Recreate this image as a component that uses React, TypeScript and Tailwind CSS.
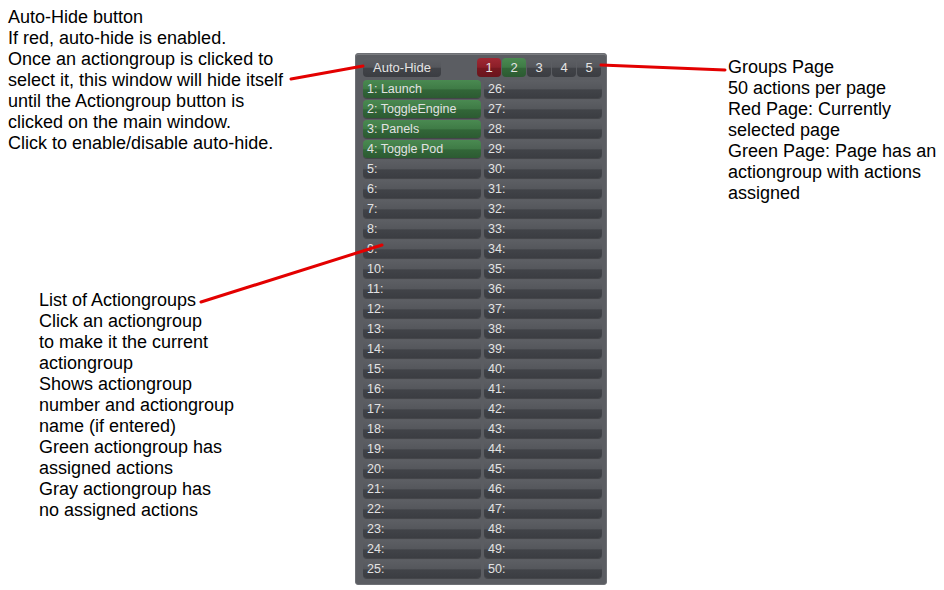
const named: Record<number, string> = {
  1: 'Launch',
  2: 'ToggleEngine',
  3: 'Panels',
  4: 'Toggle Pod',
};

const grayBtn =
  'bg-[linear-gradient(to_bottom,#5d5f64_0%,#55575c_48%,#414348_55%,#3b3d42_100%)]';
const greenBtn =
  'bg-[linear-gradient(to_bottom,#4a8a51_0%,#3f7b46_48%,#326638_55%,#2c5a32_100%)]';
const redBtn =
  'bg-[linear-gradient(to_bottom,#a02833_0%,#8c1f29_48%,#771820_55%,#6a151c_100%)]';

function GroupRow({ n }: { n: number }) {
  const name = named[n];
  return (
    <div
      className={`h-[18px] rounded-[4px] pl-[4px] flex items-center text-[12.5px] leading-none text-[#e2e2e2] shadow-[0_1px_0_rgba(0,0,0,0.25)] ${
        name ? greenBtn : grayBtn
      }`}
    >
      {n}:{name ? ` ${name}` : ''}
    </div>
  );
}

function ActionPanel() {
  const left = Array.from({ length: 25 }, (_, i) => i + 1);
  const right = Array.from({ length: 25 }, (_, i) => i + 26);
  const rows: number[] = [];
  left.forEach((n, i) => rows.push(n, right[i]));

  return (
    <div className="mt-[53px] w-[252px] h-[532px] shrink-0 rounded-[3px] border border-[#6e7075] bg-[#5b5d62] pl-[7px] pr-[5px] pt-[4px] shadow-[inset_0_1px_0_#7a7c80]">
      <div className="flex items-center h-[19px]">
        <div
          className={`w-[78px] h-[19px] rounded-[4px] flex items-center justify-center text-[13px] text-[#e4e4e4] ${grayBtn}`}
        >
          Auto-Hide
        </div>
        <div className="ml-auto flex gap-[1px]">
          {[1, 2, 3, 4, 5].map((p) => (
            <div
              key={p}
              className={`w-[24px] h-[19px] rounded-[4px] flex items-center justify-center text-[13px] text-[#e4e4e4] ${
                p === 1 ? redBtn : p === 2 ? greenBtn : grayBtn
              }`}
            >
              {p}
            </div>
          ))}
        </div>
      </div>
      <div className="mt-[3px] grid grid-cols-[118px_118px] gap-x-[3px] gap-y-[2px]">
        {rows.map((n) => (
          <GroupRow key={n} n={n} />
        ))}
      </div>
    </div>
  );
}

export default function App() {
  return (
    <div
      className="relative w-[944px] h-[590px] overflow-hidden bg-white text-black"
      style={{ fontFamily: '"Liberation Sans", Arial, sans-serif' }}
    >
      <div className="flex items-start">
        <div className="w-[355px] shrink-0 text-[18px] leading-[21px]">
          <div className="pt-[7px] pl-[8px]">
            <p>Auto-Hide button</p>
            <p>If red, auto-hide is enabled.</p>
            <p>Once an actiongroup is clicked to</p>
            <p>select it, this window will hide itself</p>
            <p>until the Actiongroup button is</p>
            <p>clicked on the main window.</p>
            <p>Click to enable/disable auto-hide.</p>
          </div>
          <div className="mt-[136px] pl-[39px]">
            <p>List of Actiongroups</p>
            <p>Click an actiongroup</p>
            <p>to make it the current</p>
            <p>actiongroup</p>
            <p>Shows actiongroup</p>
            <p>number and actiongroup</p>
            <p>name (if entered)</p>
            <p>Green actiongroup has</p>
            <p>assigned actions</p>
            <p>Gray actiongroup has</p>
            <p>no assigned actions</p>
          </div>
        </div>

        <ActionPanel />

        <div className="ml-[121px] mt-[57px] text-[18px] leading-[21px]">
          <p>Groups Page</p>
          <p>50 actions per page</p>
          <p>Red Page: Currently</p>
          <p>selected page</p>
          <p>Green Page: Page has an</p>
          <p>actiongroup with actions</p>
          <p>assigned</p>
        </div>
      </div>

      <svg
        className="absolute inset-0 pointer-events-none"
        width="944"
        height="590"
        viewBox="0 0 944 590"
      >
        <g stroke="#e30000" strokeWidth="3" strokeLinecap="round">
          <line x1="291" y1="79" x2="363" y2="66" />
          <line x1="601" y1="65" x2="725" y2="70" />
          <line x1="201" y1="302" x2="382" y2="245" />
        </g>
      </svg>
    </div>
  );
}
